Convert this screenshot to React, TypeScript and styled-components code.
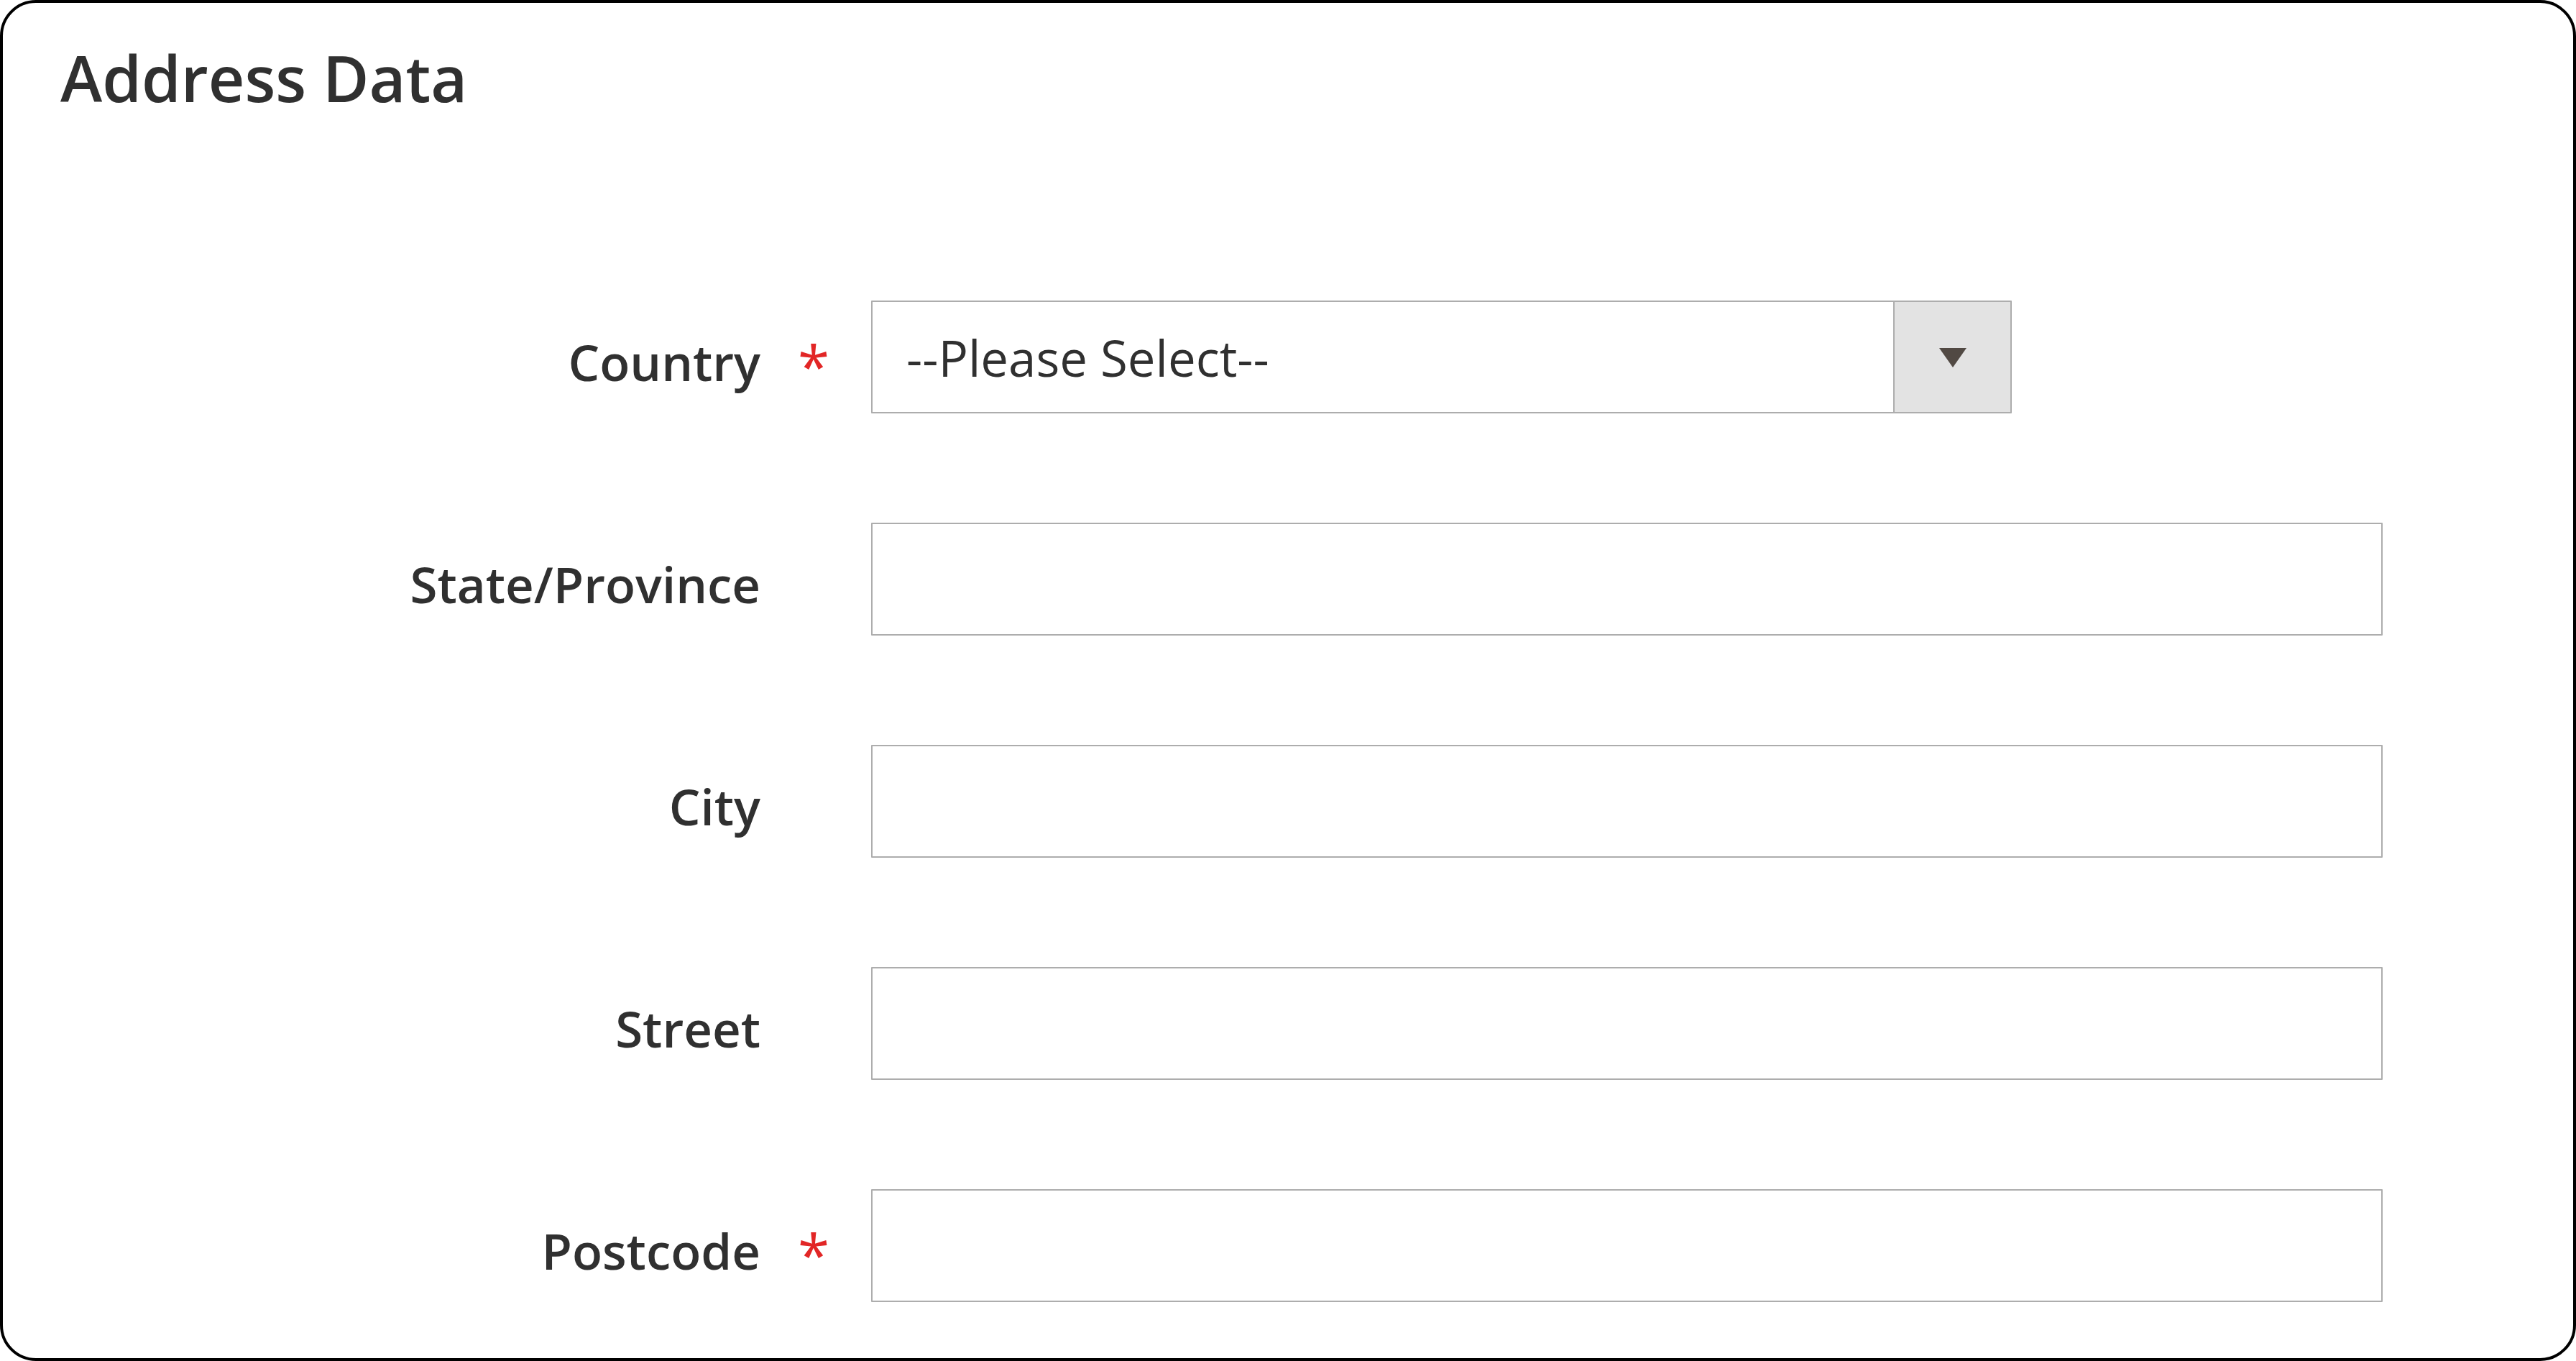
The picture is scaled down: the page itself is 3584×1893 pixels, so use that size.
import React, { FC } from 'react';
import styled, { createGlobalStyle } from 'styled-components';

const GlobalStyle = createGlobalStyle`
  html, body {
    margin: 0;
    padding: 0;
    background: #ffffff;
  }
  body {
    font-family: 'Open Sans', 'Liberation Sans', sans-serif;
    color: #303030;
  }
  * {
    box-sizing: border-box;
  }
`;

const Panel = styled.section`
  width: 100vw;
  height: 100vh;
  border: 4px solid #000;
  border-radius: 50px;
  background: #fff;
  overflow: hidden;
`;

const Title = styled.h2`
  margin: 60px 0 0 80px;
  font-size: 88px;
  line-height: 88px;
  font-weight: 600;
  color: #303030;
`;

const Form = styled.div`
  margin-top: 266px;
  display: flex;
  flex-direction: column;
  gap: 152px;
`;

const Row = styled.div`
  display: grid;
  grid-template-columns: 1054px 154px 1fr;
  align-items: center;
  height: 157px;
`;

const Label = styled.label`
  text-align: right;
  font-size: 69px;
  font-weight: 600;
  color: #303030;
  padding-top: 12px;
  white-space: nowrap;
`;

const Marker = styled.span`
  padding-left: 52px;
  padding-top: 22px;
  font-size: 80px;
  font-weight: 400;
  color: #e22626;
  line-height: 1;
`;

const TextInput = styled.input`
  width: 2103px;
  height: 157px;
  border: 2px solid #adadad;
  border-radius: 1px;
  background: #fff;
  outline: none;
  padding: 0 48px;
  font-family: inherit;
  font-size: 69px;
  color: #303030;
`;

const SelectBox = styled.div`
  width: 1587px;
  height: 157px;
  border: 2px solid #adadad;
  border-radius: 1px;
  display: flex;
  align-items: stretch;
  background: #fff;
`;

const SelectValue = styled.div`
  flex: 1;
  display: flex;
  align-items: center;
  padding-left: 47px;
  font-size: 69px;
  font-weight: 400;
  color: #303030;
`;

const SelectButton = styled.div`
  width: 163px;
  border-left: 2px solid #adadad;
  background: #e3e3e3;
  display: flex;
  align-items: center;
  justify-content: center;
`;

type Field = {
  label: string;
  required?: boolean;
  select?: string;
};

const fields: Field[] = [
  { label: 'Country', required: true, select: '--Please Select--' },
  { label: 'State/Province' },
  { label: 'City' },
  { label: 'Street' },
  { label: 'Postcode', required: true },
];

const App: FC = () => (
  <>
    <GlobalStyle />
    <Panel>
      <Title>Address Data</Title>
      <Form>
        {fields.map((f) => (
          <Row key={f.label}>
            <Label>{f.label}</Label>
            <Marker>{f.required ? '*' : ''}</Marker>
            {f.select ? (
              <SelectBox>
                <SelectValue>{f.select}</SelectValue>
                <SelectButton>
                  <svg width="40" height="28" viewBox="0 0 40 28">
                    <path d="M1 1 H39 L20 28 Z" fill="#514943" />
                  </svg>
                </SelectButton>
              </SelectBox>
            ) : (
              <TextInput type="text" aria-label={f.label} />
            )}
          </Row>
        ))}
      </Form>
    </Panel>
  </>
);

export default App;
